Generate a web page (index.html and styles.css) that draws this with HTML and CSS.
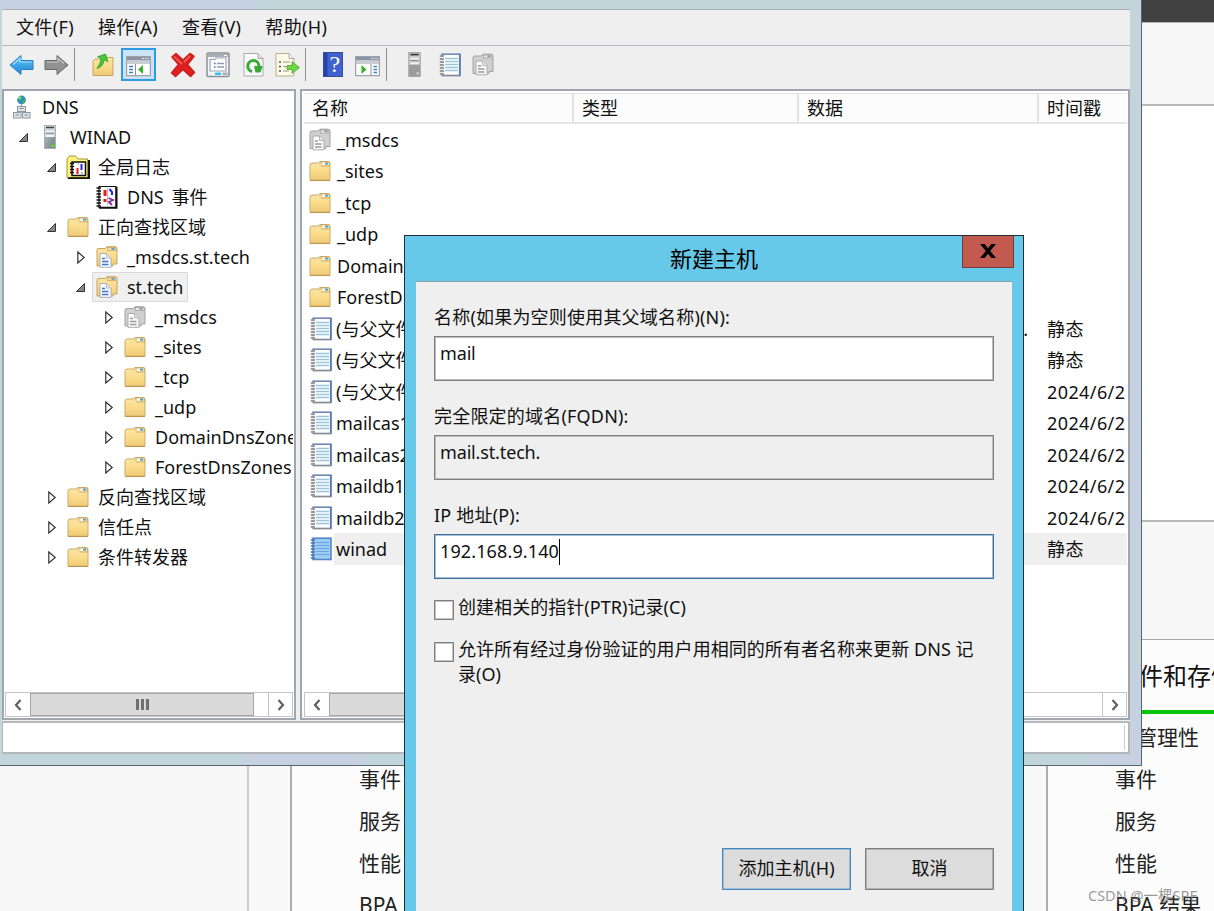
FILE: index.html
```html
<!DOCTYPE html>
<html lang="zh-CN">
<head>
    <meta charset="UTF-8">
    <meta name="viewport" content="width=device-width, initial-scale=1.0">
    <title>DNS 管理器</title>
    <link rel="stylesheet" href="styles.css">
</head>
<body>
    <svg class="defs" aria-hidden="true">
        <defs>
            <linearGradient id="gFolder" x1="0" y1="0" x2="0" y2="1">
                <stop offset="0" stop-color="#fbe7ab"/><stop offset="0.5" stop-color="#fbdc8b"/><stop offset="1" stop-color="#edca78"/>
            </linearGradient>
            <linearGradient id="gServer" x1="0" y1="0" x2="1" y2="1">
                <stop offset="0" stop-color="#b9c4c9"/><stop offset="1" stop-color="#6f7f87"/>
            </linearGradient>
            <linearGradient id="gBlue" x1="0" y1="0" x2="0" y2="1">
                <stop offset="0" stop-color="#63c4f5"/><stop offset="1" stop-color="#1b86d6"/>
            </linearGradient>
        </defs>
        <symbol id="folder" viewBox="0 0 22 22">
            <path d="M1 5.5 Q1 3 3 3 H9 L11 1.5 H19 Q21 1.5 21 3.5 V20 Q21 20.5 20.5 20.5 H1 Z" fill="url(#gFolder)" stroke="#cdab68"/>
            <path d="M10.5 4.5 L12.5 2 H20.5 V6 H12" fill="#f3dda3" stroke="#c9a35c" stroke-width="0.8"/>
            <rect x="13.5" y="2.6" width="5" height="2" fill="#fff"/><rect x="16" y="2.6" width="3" height="2" fill="#4aa0d8"/>
            <path d="M1 20.3 H21" stroke="#b8924a"/>
        </symbol>
        <symbol id="zone" viewBox="0 0 22 22">
            <path d="M1 4 Q1 2.5 3 2.5 H9 L11 0.7 H19 Q21 0.7 21 2.5 V18 H17 V20 H1 Z" fill="url(#gFolder)" stroke="#c9a35c"/>
            <rect x="11.5" y="1.5" width="8.5" height="3" fill="#f3dda3" stroke="#c9a35c" stroke-width="0.7"/>
            <rect x="15.5" y="2" width="3" height="1.8" fill="#4aa0d8"/>
            <path d="M4 7.5 H10.5 L15 12 V21.3 H4 Z" fill="#f8fbff" stroke="#a9b0bb"/>
            <path d="M10.5 7.5 V12 H15" fill="#dfe6ef" stroke="#a9b0bb" stroke-width="0.8"/>
            <path d="M6 12.5 H9 M6 15.5 H12.5 M6 18.5 H12.5" stroke="#3f78c0" stroke-width="1.4"/>
        </symbol>
        <symbol id="zone-grey" viewBox="0 0 22 22">
            <path d="M1 4 Q1 2.5 3 2.5 H9 L11 0.7 H19 Q21 0.7 21 2.5 V18 H17 V20 H1 Z" fill="#d0d0d0" stroke="#a3a3a3"/>
            <rect x="11.5" y="1.5" width="8.5" height="3" fill="#e6e6e6" stroke="#9d9d9d" stroke-width="0.7"/>
            <rect x="15.5" y="2" width="3" height="1.6" fill="#8c8c8c"/>
            <path d="M4 7.5 H10.5 L15 12 V21.3 H4 Z" fill="#fbfbfb" stroke="#aaa"/>
            <path d="M10.5 7.5 V12 H15" fill="#e4e4e4" stroke="#aaa" stroke-width="0.8"/>
            <path d="M6 12.5 H9 M6 15.5 H12.5 M6 18.5 H12.5" stroke="#9a9a9a" stroke-width="1.4"/>
        </symbol>
        <symbol id="record" viewBox="0 0 22 24">
            <rect x="3" y="1.2" width="18" height="21.3" fill="#fcfeff" stroke="#7289b5" stroke-width="1.6"/>
            <path d="M20.7 1 V22.5" stroke="#5878b8" stroke-width="1.6"/>
            <path d="M6 5.5 H19 M6 8.5 H19 M6 11.5 H19 M6 14.5 H19 M6 17.5 H19" stroke="#9cc5dc" stroke-width="1.4"/>
            <path d="M3 2 V22.5" stroke="#e4e6ea" stroke-width="2.5"/>
            <path d="M0.8 3 H5 M0.8 6 H5 M0.8 9 H5 M0.8 12 H5 M0.8 15 H5 M0.8 18 H5 M0.8 21 H5" stroke="#808080" stroke-width="1.5"/>
            <path d="M3 22.6 H21" stroke="#8a8a8a"/>
        </symbol>
        <symbol id="record-on" viewBox="0 0 22 24">
            <rect x="3" y="1.2" width="18" height="21.3" fill="#9cccf2" stroke="#5585c8" stroke-width="1.6"/>
            <path d="M6 5.5 H19 M6 8.5 H19 M6 11.5 H19 M6 14.5 H19 M6 17.5 H19" stroke="#64a6e2" stroke-width="1.2"/>
            <path d="M0.8 3 H5 M0.8 6 H5 M0.8 9 H5 M0.8 12 H5 M0.8 15 H5 M0.8 18 H5 M0.8 21 H5" stroke="#4773a8" stroke-width="1.5"/>
        </symbol>
        <symbol id="server" viewBox="0 0 12 24">
            <rect x="0.5" y="0.5" width="11" height="23" fill="url(#gServer)" stroke="#a7b1b6"/>
            <rect x="1" y="1" width="10" height="11" fill="#cdd5d9"/>
            <path d="M2 2.5 H10" stroke="#3b4347" stroke-width="1.4"/><path d="M2 6.5 H10 M2 11 H10" stroke="#fff" stroke-width="1.6"/>
            <path d="M2 8.2 H10" stroke="#7b868b"/><rect x="7.5" y="19.5" width="3" height="2.5" fill="#63e21b"/>
        </symbol>
        <symbol id="server-grey" viewBox="0 0 12 24">
            <rect x="0.5" y="0.5" width="11" height="23" fill="#9c9c9c" stroke="#a8a8a8"/>
            <rect x="1" y="1" width="10" height="11" fill="#cfcfcf"/>
            <path d="M2 2.5 H10" stroke="#333" stroke-width="1.6"/><path d="M2 6.5 H10 M2 11 H10" stroke="#f6f6f6" stroke-width="1.6"/>
            <path d="M2 8.2 H10" stroke="#888"/><rect x="8" y="19.5" width="2" height="2" fill="#ddd"/>
        </symbol>
        <symbol id="dns" viewBox="0 0 18 24">
            <circle cx="8.5" cy="5" r="4.4" fill="#2f8ccc"/>
            <path d="M5 2.5 Q8 0.5 9.5 1.5 L8 5 L6 6 Z M9 6 L12 4.5 Q12.5 7.5 9.5 9 Z" fill="#43b549"/>
            <circle cx="6.5" cy="2.8" r="1" fill="#c7ecff"/>
            <path d="M8.5 9.5 V12" stroke="#8e979f"/>
            <g fill="#dfe5ea" stroke="#8e979f">
                <rect x="4.5" y="11.5" width="8" height="5"/><rect x="0.5" y="17.5" width="7.5" height="5.5"/><rect x="9.5" y="17.5" width="7.5" height="5.5"/>
            </g>
            <path d="M6.5 13.5 H10.5 M2.5 20 H6 M11.5 20 H15" stroke="#7f8992"/>
        </symbol>
        <symbol id="logs" viewBox="0 0 24 24">
            <path d="M1 23 V4 L3.5 1 H9.5 L12 4 H21.5 V23 Z" fill="#fff37a" stroke="#9c9434"/>
            <path d="M2 23.2 H23 V5" fill="none" stroke="#111" stroke-width="2"/>
            <path d="M6 7 H19.5 V20.5 H6 Z" fill="#fff" stroke="#111" stroke-width="1.5"/>
            <path d="M4 8.5 H8 M4 11.5 H8 M4 14.5 H8 M4 17.5 H8" stroke="#111" stroke-width="1.5"/>
            <path d="M11.5 13 V19" stroke="#f01818" stroke-width="2"/><path d="M15.5 9 V15" stroke="#2525e8" stroke-width="2"/>
            <path d="M12 9 H13 M15 18 H17" stroke="#777"/>
        </symbol>
        <symbol id="event" viewBox="0 0 22 24">
            <path d="M3 1.5 H20 V22.5 H3 Z" fill="#fff" stroke="#111" stroke-width="1.2"/>
            <path d="M3 22.7 H20.5 V2" fill="none" stroke="#111" stroke-width="2"/>
            <path d="M0.5 3 H5 M0.5 6 H5 M0.5 9 H5 M0.5 12 H5 M0.5 15 H5 M0.5 18 H5 M0.5 21 H5" stroke="#111" stroke-width="1.5"/>
            <path d="M9 5 V11 M9 14 V17" stroke="#f01818" stroke-width="3"/><path d="M13.5 4 L16 7 V10" fill="none" stroke="#2525e8" stroke-width="2"/>
            <path d="M12.5 13 L17 15 L13 17 L16 20" fill="none" stroke="#8a2aa0" stroke-width="1.8"/>
            <path d="M11.5 3 V20" stroke="#aaa" stroke-width="0.8"/>
        </symbol>
        <symbol id="open" viewBox="0 0 12 12"><path d="M9.5 2.5 V10.5 H1.5 Z" fill="#888" stroke="#333"/></symbol>
        <symbol id="closed" viewBox="0 0 12 14"><path d="M2.8 2 L9.2 7.5 L2.8 13 Z" fill="#fff" stroke="#333" stroke-width="1.2"/></symbol>
        <symbol id="prev" viewBox="0 0 12 12"><path d="M8.5 1 L4 6 L8.5 11" fill="none" stroke="#606060" stroke-width="2.2"/></symbol>
        <symbol id="next" viewBox="0 0 12 12"><path d="M3.5 1 L8 6 L3.5 11" fill="none" stroke="#606060" stroke-width="2.2"/></symbol>
    </svg>

    <!-- Server Manager behind -->
    <div class="manager">
        <div class="manager-bar"></div>
        <div class="manager-nav"></div>
        <div class="manager-welcome"></div>
        <div class="manager-groups"></div>
        <div class="tiles">
            <div class="side"></div>
            <div class="tile">
                <h3></h3>
                <p></p><p>事件</p><p>服务</p><p>性能</p><p>BPA</p>
            </div>
            <div class="tile second">
                <h3>文件和存储</h3>
                <p>可管理性</p><p>事件</p><p>服务</p><p>性能</p><p>BPA 结果</p>
            </div>
        </div>
    </div>

    <!-- DNS console -->
    <div class="console">
        <div class="client">
            <div class="menu"><span>文件(F)</span><span>操作(A)</span><span>查看(V)</span><span>帮助(H)</span></div>
            <div class="toolbar">
                <span class="tool"><svg width="25" height="22" viewBox="0 0 25 22"><path d="M1 11 L12 1.5 V6.5 H24 V15.5 H12 V20.5 Z" fill="url(#gBlue)" stroke="#2a7fc0"/><path d="M4 10.5 L11 4.5 V8 H22.5" fill="none" stroke="#a5e0fc" stroke-width="1.2"/></svg></span>
                <span class="tool"><svg width="25" height="22" viewBox="0 0 25 22"><path d="M24 11 L13 1.5 V6.5 H1 V15.5 H13 V20.5 Z" fill="#929292" stroke="#666"/><path d="M2.5 8 H14 V4.5 L20 9.5" fill="none" stroke="#c4c4c4" stroke-width="1.2"/></svg></span>
                <span class="sep"></span>
                <span class="tool"><svg width="22" height="24" viewBox="0 0 22 24"><path d="M1 8 L3 6 H9 L11 4.5 H21 V22.5 H1 Z" fill="url(#gFolder)" stroke="#c9a35c"/><path d="M5 15.5 Q11 14 12.5 6.5 L16 9 L13.5 1 L5.5 3.8 L9 5 Q9 10 5 15.5 Z" fill="#45c93a" stroke="#2a9a2a" stroke-width="0.8"/></svg></span>
                <span class="tool pressed"><svg width="25" height="24" viewBox="0 0 25 24"><rect x="0.7" y="3.7" width="23.6" height="19" fill="#fff" stroke="#8b8f99"/><rect x="1" y="4" width="23" height="3.5" fill="#8c93a3"/><path d="M16 5.5 H18 M19 5.5 H20.5 M21.5 5.5 H23" stroke="#e8f2ff"/><path d="M1 9.5 H24" stroke="#c9ccd1" stroke-width="3"/><path d="M9.5 11 V22.5" stroke="#8b8f99"/><path d="M3 13.5 H7 M3 16.5 H7 M3 19.5 H7" stroke="#3d7fc9" stroke-width="1.4"/><path d="M17 12 V21 L12 16.5 Z" fill="#37b32b"/></svg></span>
                <span class="tool delete"><svg width="26" height="26" viewBox="0 0 26 26"><path d="M2 5 L6 1.5 L13 8 L20 1.5 L24 4.5 L17.5 12.5 L24.5 20.5 L20.5 24.5 L13 17.5 L5.5 24.5 L1.5 21 L8.5 12.5 Z" fill="#de2020" stroke="#cf2020" stroke-width="1.6" stroke-linejoin="round"/><path d="M4 4.5 L12 12 M20 4 L14 10" stroke="#f46a60" stroke-width="1.6"/></svg></span>
                <span class="tool"><svg width="24" height="26" viewBox="0 0 24 26"><rect x="1" y="1" width="22" height="23.5" rx="1" fill="#f6f7f9" stroke="#8a8e96" stroke-width="1.5"/><rect x="2" y="2" width="20" height="3" fill="#a9adb5"/><path d="M18 3.5 H21" stroke="#fff"/><path d="M4 7.5 H9 L10 6 H20 V19 H4 Z" fill="#fff" stroke="#9aa4b4" stroke-width="1.2"/><path d="M8 11.5 H9.5 M8 15 H9.5" stroke="#2d75c5" stroke-width="1.6"/><path d="M11 11.5 H18 M11 15 H18" stroke="#909aab" stroke-width="1.4"/><rect x="9" y="20.5" width="6" height="2.5" fill="#38c0f0"/><rect x="16.5" y="20.5" width="5" height="2.5" fill="#a9adb5"/></svg></span>
                <span class="tool refresh"><svg width="21" height="26" viewBox="0 0 21 26"><path d="M1 1.5 H15 L20 6.5 V24 H1 Z" fill="#fafafa" stroke="#aaa"/><path d="M15 1.5 V6.5 H20" fill="#ddd" stroke="#aaa"/><path d="M9 19.5 A5.6 5.6 0 1 1 16 14" fill="none" stroke="#37a934" stroke-width="3"/><path d="M11 14 H19.5 V15 L17.5 20.5 H12.5 Z" fill="#37a934"/></svg></span>
                <span class="tool export"><svg width="25" height="26" viewBox="0 0 25 26"><path d="M1 1.5 H14 L19 6.5 V24 H1 Z" fill="#fffbe6" stroke="#b3ad96"/><path d="M14 1.5 V6.5 H19" fill="#eee" stroke="#aaa"/><path d="M4 10 H6 M4 14.5 H6 M4 19 H6" stroke="#555" stroke-width="1.6"/><path d="M8 10 H15 M8 14.5 H13 M8 19 H14" stroke="#999" stroke-width="1.2"/><path d="M12 13.5 H17 V9.5 L24.5 15.5 L17 21.5 V17.5 H12 Z" fill="#6cd646" stroke="#4bab2c" stroke-width="0.8"/></svg></span>
                <span class="sep"></span>
                <span class="tool help"><svg width="20" height="25" viewBox="0 0 20 25"><rect x="0.5" y="0.5" width="19" height="24" fill="#3f62cf" stroke="#3a4d9c"/><path d="M1 1 H4.5 V24 H1 Z" fill="#2744a8"/><text x="11.8" y="20" class="qmark" text-anchor="middle">?</text></svg></span>
                <span class="tool"><svg width="25" height="24" viewBox="0 0 25 24"><rect x="0.7" y="3.7" width="23.6" height="19" fill="#fff" stroke="#8b8f99"/><rect x="1" y="4" width="23" height="3.5" fill="#8c93a3"/><path d="M16 5.5 H18 M19 5.5 H20.5 M21.5 5.5 H23" stroke="#e8f2ff"/><path d="M1 9.5 H24" stroke="#c9ccd1" stroke-width="3"/><path d="M16 11 V22.5" stroke="#8b8f99"/><path d="M18.5 13.5 H22 M18.5 16.5 H22 M18.5 19.5 H22" stroke="#3d7fc9" stroke-width="1.6"/><path d="M6.5 12 V21 L11.5 16.5 Z" fill="#37b32b"/></svg></span>
                <span class="sep last"></span>
                <span class="tool"><svg width="13" height="25"><use href="#server-grey"/></svg></span>
                <span class="tool"><svg width="22" height="24"><use href="#record"/></svg></span>
                <span class="tool narrow"><svg width="22" height="23"><use href="#zone-grey"/></svg></span>
            </div>

            <div class="panes">
                <div class="pane tree">
                    <div class="nodes">
                        <div class="node lv0"><span class="icon"><svg width="18" height="24"><use href="#dns"/></svg></span><span class="name">DNS</span></div>
                        <div class="node lv1"><svg class="arrow"><use href="#open"/></svg><span class="icon"><svg width="12" height="24"><use href="#server"/></svg></span><span class="name">WINAD</span></div>
                        <div class="node lv2"><svg class="arrow"><use href="#open"/></svg><span class="icon"><svg width="24" height="24"><use href="#logs"/></svg></span><span class="name">全局日志</span></div>
                        <div class="node lv3"><svg class="arrow"></svg><span class="icon"><svg width="22" height="24"><use href="#event"/></svg></span><span class="name">DNS 事件</span></div>
                        <div class="node lv2"><svg class="arrow"><use href="#open"/></svg><span class="icon"><svg width="22" height="22"><use href="#folder"/></svg></span><span class="name">正向查找区域</span></div>
                        <div class="node lv3"><svg class="arrow"><use href="#closed"/></svg><span class="icon"><svg width="22" height="22"><use href="#zone"/></svg></span><span class="name">_msdcs.st.tech</span></div>
                        <div class="node lv3"><svg class="arrow"><use href="#open"/></svg><span class="picked"><span class="icon"><svg width="22" height="22"><use href="#zone"/></svg></span><span class="name">st.tech</span></span></div>
                        <div class="node lv4"><svg class="arrow"><use href="#closed"/></svg><span class="icon"><svg width="22" height="22"><use href="#zone-grey"/></svg></span><span class="name">_msdcs</span></div>
                        <div class="node lv4"><svg class="arrow"><use href="#closed"/></svg><span class="icon"><svg width="22" height="22"><use href="#folder"/></svg></span><span class="name">_sites</span></div>
                        <div class="node lv4"><svg class="arrow"><use href="#closed"/></svg><span class="icon"><svg width="22" height="22"><use href="#folder"/></svg></span><span class="name">_tcp</span></div>
                        <div class="node lv4"><svg class="arrow"><use href="#closed"/></svg><span class="icon"><svg width="22" height="22"><use href="#folder"/></svg></span><span class="name">_udp</span></div>
                        <div class="node lv4"><svg class="arrow"><use href="#closed"/></svg><span class="icon"><svg width="22" height="22"><use href="#folder"/></svg></span><span class="name">DomainDnsZones</span></div>
                        <div class="node lv4"><svg class="arrow"><use href="#closed"/></svg><span class="icon"><svg width="22" height="22"><use href="#folder"/></svg></span><span class="name">ForestDnsZones</span></div>
                        <div class="node lv2"><svg class="arrow"><use href="#closed"/></svg><span class="icon"><svg width="22" height="22"><use href="#folder"/></svg></span><span class="name">反向查找区域</span></div>
                        <div class="node lv2"><svg class="arrow"><use href="#closed"/></svg><span class="icon"><svg width="22" height="22"><use href="#folder"/></svg></span><span class="name">信任点</span></div>
                        <div class="node lv2"><svg class="arrow"><use href="#closed"/></svg><span class="icon"><svg width="22" height="22"><use href="#folder"/></svg></span><span class="name">条件转发器</span></div>
                    </div>
                    <div class="scroll">
                        <span class="step"><svg width="12" height="12"><use href="#prev"/></svg></span>
                        <span class="thumb"><i></i><i></i><i></i></span>
                        <span class="track"></span>
                        <span class="step end"><svg width="12" height="12"><use href="#next"/></svg></span>
                    </div>
                </div>

                <div class="pane list">
                    <div class="head row"><span>名称</span><span>类型</span><span>数据</span><span>时间戳</span></div>
                    <div class="rows">
                        <div class="row"><span class="cell"><svg width="22" height="23"><use href="#zone-grey"/></svg>_msdcs</span></div>
                        <div class="row"><span class="cell"><svg width="22" height="22"><use href="#folder"/></svg>_sites</span></div>
                        <div class="row"><span class="cell"><svg width="22" height="22"><use href="#folder"/></svg>_tcp</span></div>
                        <div class="row"><span class="cell"><svg width="22" height="22"><use href="#folder"/></svg>_udp</span></div>
                        <div class="row"><span class="cell"><svg width="22" height="22"><use href="#folder"/></svg>DomainDnsZones</span></div>
                        <div class="row"><span class="cell"><svg width="22" height="22"><use href="#folder"/></svg>ForestDnsZones</span></div>
                        <div class="row rec"><span class="cell"><svg width="22" height="24"><use href="#record"/></svg>(与父文件夹相同)</span><span></span><span class="more">...</span><span>静态</span></div>
                        <div class="row rec"><span class="cell"><svg width="22" height="24"><use href="#record"/></svg>(与父文件夹相同)</span><span></span><span></span><span>静态</span></div>
                        <div class="row rec"><span class="cell"><svg width="22" height="24"><use href="#record"/></svg>(与父文件夹相同)</span><span></span><span></span><span>2024/6/2</span></div>
                        <div class="row rec"><span class="cell"><svg width="22" height="24"><use href="#record"/></svg>mailcas1</span><span></span><span></span><span>2024/6/2</span></div>
                        <div class="row rec"><span class="cell"><svg width="22" height="24"><use href="#record"/></svg>mailcas2</span><span></span><span></span><span>2024/6/2</span></div>
                        <div class="row rec"><span class="cell"><svg width="22" height="24"><use href="#record"/></svg>maildb1</span><span></span><span></span><span>2024/6/2</span></div>
                        <div class="row rec"><span class="cell"><svg width="22" height="24"><use href="#record"/></svg>maildb2</span><span></span><span></span><span>2024/6/2</span></div>
                        <div class="row rec on"><span class="cell"><svg width="22" height="24"><use href="#record-on"/></svg>winad</span><span></span><span></span><span>静态</span></div>
                    </div>
                    <div class="scroll">
                        <span class="step"><svg width="12" height="12"><use href="#prev"/></svg></span>
                        <span class="thumb wide"></span>
                        <span class="step end"><svg width="12" height="12"><use href="#next"/></svg></span>
                    </div>
                </div>
            </div>
            <div class="status"><span></span></div>
        </div>
    </div>

    <!-- New host dialog -->
    <div class="dialog">
        <div class="title">新建主机
            <span class="close"><svg width="16" height="14" viewBox="0 0 16 14"><path d="M0 0 H4.6 L8 4.2 L11.4 0 H16 L10.2 7 L16 14 H11.4 L8 9.8 L4.6 14 H0 L5.8 7 Z"/></svg></span>
        </div>
        <div class="body">
            <div class="label">名称(如果为空则使用其父域名称)(N):</div>
            <div class="field">mail</div>
            <div class="label">完全限定的域名(FQDN):</div>
            <div class="field readonly">mail.st.tech.</div>
            <div class="label">IP 地址(P):</div>
            <div class="field focus">192.168.9.140<i class="caret"></i></div>
            <div class="check"><i></i><span>创建相关的指针(PTR)记录(C)</span></div>
            <div class="check second"><i></i><span>允许所有经过身份验证的用户用相同的所有者名称来更新 DNS 记录(O)</span></div>
            <div class="buttons"><span class="btn default">添加主机(H)</span><span class="btn">取消</span></div>
        </div>
    </div>

    <div class="watermark">CSDN @一棵SRE</div>
</body>
</html>
```
FILE: styles.css
```css
* {
    box-sizing: border-box;
}

body {
    position: relative;
    width: 1214px;
    height: 911px;
    margin: 0;
    overflow: hidden;
    background: #fff;
    color: #111;
    font-family: "Noto Sans", "Noto Sans CJK SC", sans-serif;
    font-size: 18px;
    line-height: 24px;
    white-space: nowrap;
}

svg {
    display: block;
    flex: none;
}

.defs {
    position: absolute;
    width: 0;
    height: 0;
}

/* server manager */
.manager {
    display: grid;
    grid-template-rows: 22px 84px 416px 117px 272px;
    height: 911px;
    overflow: hidden;
}

.manager-bar {
    background: #404040;
}

.manager-nav {
    border-top: 1px solid #b5b5b5;
    border-bottom: 2px solid #b8b8b8;
    background: #f7f7f7;
}

.manager-welcome {
    border-bottom: 2px solid #b8b8b8;
    background: #fff;
}

.manager-groups {
    background: #f7f7f7;
}

.tiles {
    display: grid;
    grid-template-columns: 249px 741px 1fr;
    background: #f9f9f9;
    overflow: hidden;
}

.side {
    border-right: 2px solid #cdcdcd;
    background: #f7f7f7;
}

.tile {
    margin-left: 41px;
    border-top: 1px solid #a5a5a5;
    border-left: 2px solid #aeaeae;
    background: #fcfcfc;
    overflow: hidden;
}

.tile.second {
    margin-left: 56px;
}

.tile h3 {
    height: 74px;
    margin: 0 0 2px;
    padding-left: 67px;
    border-bottom: 4px solid #00c60a;
    font-size: 24px;
    font-weight: normal;
    line-height: 72px;
}

.tile p {
    height: 42px;
    margin: 0;
    padding-left: 67px;
    font-size: 21px;
    line-height: 42px;
    color: #222;
}

/* console window */
.console {
    position: absolute;
    left: 0;
    top: 0;
    width: 1142px;
    height: 766px;
    padding: 9px 11px 11px 2px;
    border-right: 1px solid #56666d;
    border-bottom: 1px solid #56666d;
    background:
        linear-gradient(#c6d1e1, #c6d1e1) 0 0 / 256px 9px no-repeat,
        linear-gradient(#c6d1e1, #c6d1e1) 100% 278px / 12px 250px no-repeat,
        linear-gradient(#c6d1e1, #c6d1e1) 100% 100% / 51px 100px no-repeat,
        linear-gradient(#c6d1e1, #c6d1e1) 243px 100% / 121px 12px no-repeat,
        #c2d5da;
}

.client {
    display: flex;
    flex-direction: column;
    height: 745px;
    border-top: 1px solid #a9b1b7;
    background: #efefef;
}

.menu {
    display: flex;
    gap: 24px;
    height: 36px;
    padding-left: 14px;
    border-bottom: 1px solid #b8bcc1;
    letter-spacing: 0.35px;
    line-height: 35px;
}

.toolbar {
    display: flex;
    align-items: center;
    height: 43px;
    padding: 0 0 5px 2px;
}

.tool {
    display: flex;
    justify-content: center;
    align-items: center;
    width: 35px;
    height: 33px;
}

.tool.pressed {
    margin-left: 1px;
    border: 2px solid #2f9be0;
    background: #cbe3f6;
}

.tool.delete {
    margin-left: 9px;
}

.tool.refresh {
    margin-left: 1px;
}

.tool.export {
    margin-left: -1px;
}

.tool.narrow {
    margin-left: -2px;
}

.sep {
    width: 1px;
    height: 33px;
    margin-right: 10px;
    background: #8f8f8f;
}

.sep.last {
    margin-left: 1px;
}

.help {
    margin-left: -1px;
}

.qmark {
    fill: #fff;
    font-family: "Liberation Serif", serif;
    font-size: 24px;
}

.panes {
    display: flex;
    gap: 4px;
    height: 632px;
}

.pane {
    display: flex;
    flex-direction: column;
    border: 2px solid #a0a5ae;
    background: #fff;
}

.tree {
    width: 294px;
    padding: 1px;
}

.list {
    width: 830px;
    padding: 2px 1px 1px 2px;
}

.nodes,
.rows {
    flex: 1;
    overflow: hidden;
}

.node {
    display: flex;
    align-items: center;
    height: 30px;
    line-height: 28px;
}

.name {
    word-spacing: 3px;
}

.arrow {
    width: 12px;
    height: 14px;
    margin-right: 8px;
}

.icon {
    display: flex;
    justify-content: center;
    width: 24px;
    margin-right: 8px;
    flex: none;
}

.lv0 { padding-left: 5px; }
.lv1 { padding-left: 13px; }
.lv2 { padding-left: 41px; }
.lv3 { padding-left: 70px; }
.lv4 { padding-left: 98px; }

.picked {
    display: flex;
    align-items: center;
    height: 30px;
    margin-left: -3px;
    padding: 0 4px 0 2px;
    border: 1px solid #d9d9d9;
    background: #f0f0f0;
}

.scroll {
    display: flex;
    height: 25px;
    border: 1px solid #c4c4c4;
}

.step {
    display: flex;
    justify-content: center;
    align-items: center;
    width: 24px;
    flex: none;
}

.step.end {
    margin-left: auto;
    border-left: 1px solid #c4c4c4;
}

.track {
    flex: 1;
}

.thumb {
    display: flex;
    justify-content: center;
    align-items: center;
    gap: 2px;
    width: 224px;
    border: 1px solid #a6a6a6;
    background: #dadada;
}

.thumb.wide {
    width: 540px;
}

.thumb i {
    width: 3px;
    height: 11px;
    background: #707070;
}

.row {
    display: grid;
    grid-template-columns: 270px 225px 240px 88px;
    height: 31.5px;
    line-height: 32px;
    overflow: hidden;
}

.head {
    height: 31px;
    border-top: 1px solid #e2e2e2;
    border-bottom: 2px solid #e5e5e5;
    background: #fcfcfc;
    line-height: 28px;
}

.head span {
    padding-left: 8px;
    border-right: 2px solid #e4e4e4;
}

.head span:last-child {
    border: 0;
}

.rows .row > span:nth-child(4) {
    padding-left: 8px;
    letter-spacing: 0.4px;
}

.cell {
    display: flex;
    align-items: center;
    gap: 6px;
    padding-left: 5px;
}

.rec .cell {
    gap: 4px;
    padding-left: 6px;
}

.more {
    padding-right: 11px;
    text-align: right;
}

.row.on {
    background: linear-gradient(#efefef, #efefef) 30px 0 no-repeat;
}

.status {
    display: flex;
    justify-content: flex-end;
    height: 33px;
    margin-top: 1px;
    padding: 2px 3px 2px 0;
    border: 2px solid #b5b8bb;
    border-left-width: 1px;
    background: #fff;
}

.status span {
    border-right: 1px solid #ccc;
}

/* dialog window */
.dialog {
    position: absolute;
    left: 404px;
    top: 235px;
    width: 620px;
    height: 690px;
    padding: 0 11px;
    border: 1px solid #1f3038;
    background: #66c9ea;
}

.title {
    height: 45px;
    color: #000;
    font-size: 22px;
    line-height: 45px;
    text-align: center;
}

.close {
    position: absolute;
    right: 9px;
    top: 0;
    display: flex;
    justify-content: center;
    align-items: center;
    width: 52px;
    height: 32px;
    border: 1px solid #733a3a;
    border-top: 0;
    background: #c35a50;
}

.close svg {
    margin-top: -2px;
}

.body {
    height: 650px;
    padding: 23px 18px 0;
    border-top: 1px solid #8ba3af;
    background: #efefef;
}

.label {
    height: 24px;
    letter-spacing: 0.2px;
}

.field {
    display: flex;
    height: 45px;
    margin: 7px 0 23px;
    padding: 4px 5px;
    border: 1px solid #808080;
    box-shadow: inset 0 0 0 1px #bcbcbc;
    background: #fff;
    letter-spacing: -0.15px;
}

.field.readonly {
    background: #efefef;
}

.field.focus {
    margin-bottom: 16px;
    border-color: #3d6f99;
    box-shadow: inset 0 0 0 1px #a5c0d6;
    letter-spacing: 0.12px;
}

.caret {
    width: 1px;
    height: 26px;
    background: #000;
}

.check {
    display: flex;
    height: 42px;
    white-space: normal;
    line-height: 25px;
}

.check i {
    flex: none;
    width: 20px;
    height: 20px;
    margin: 5px 4px 0 0;
    border: 1px solid #808080;
    box-shadow: inset 0 0 0 1px #c4c4c4;
    background: #fff;
}

.check span {
    max-width: 525px;
    letter-spacing: 0.05px;
}

.check.second {
    height: 211px;
}

.buttons {
    display: flex;
    justify-content: flex-end;
    gap: 14px;
}

.btn {
    width: 129px;
    height: 42px;
    border: 1px solid #808080;
    box-shadow: inset 0 0 0 1px #b0b0b0;
    background: #dcdcdc;
    line-height: 39px;
    text-align: center;
}

.btn.default {
    border-color: #4a86be;
    box-shadow: inset 0 0 0 1px #9dbdd9;
}

.watermark {
    position: absolute;
    left: 1088px;
    top: 883px;
    color: rgba(120, 120, 120, 0.75);
    font-size: 14.5px;
}
```
